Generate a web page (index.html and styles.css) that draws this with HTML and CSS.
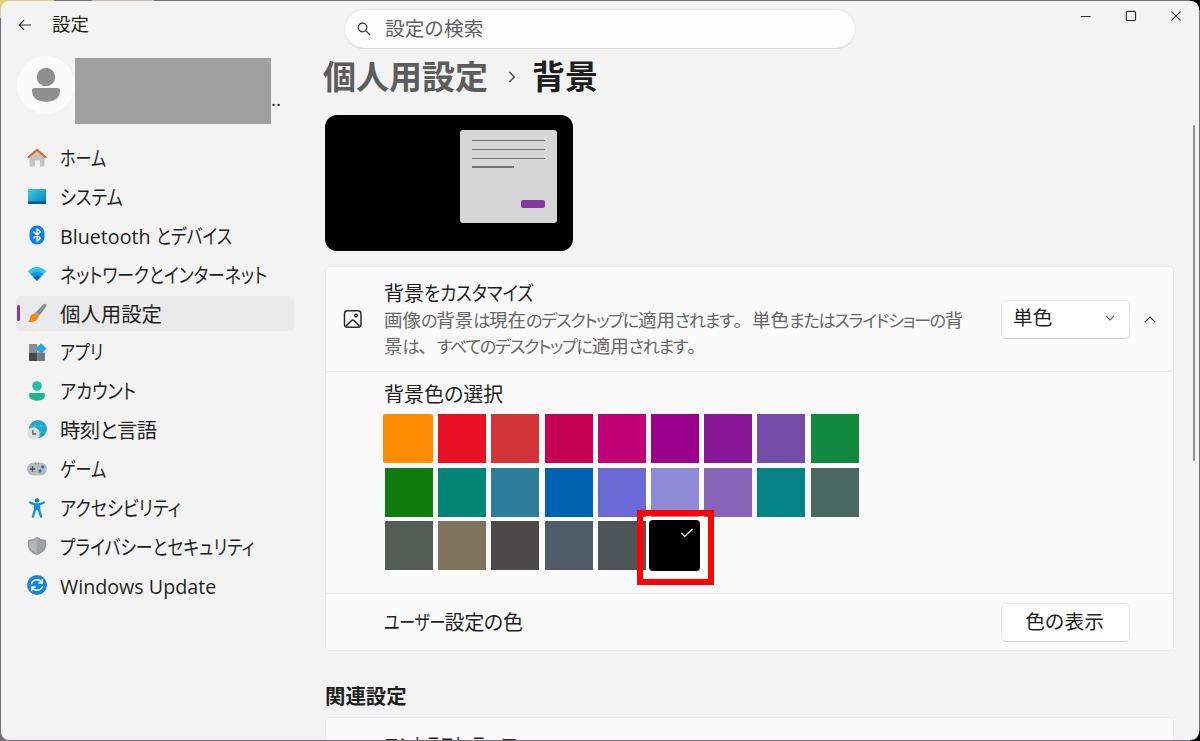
FILE: index.html
```html
<!DOCTYPE html>
<html lang="ja">
  <head>
    <meta charset="utf-8">
    <title>設定</title>
    <link rel="stylesheet" href="styles.css">
  </head>
  <body>
    <div class="window">
      <header class="titlebar">
        <svg class="back" width="14" height="12" viewBox="0 0 14 12"><path d="M13 6H1.5M6 1.2L1.2 6L6 10.8" /></svg>
        <span class="app-title">設定</span>
        <div class="search">
          <svg width="14" height="14" viewBox="0 0 14 14"><circle cx="5.5" cy="5.5" r="4.3" /><path d="M8.7 8.7L13 13" /></svg>
          <span>設定の検索</span>
        </div>
        <div class="controls">
          <svg width="12" height="12" viewBox="0 0 12 12"><path d="M1 6.5H10.6" /></svg>
          <svg width="12" height="12" viewBox="0 0 12 12"><rect x="1.3" y="1.3" width="9.2" height="9.2" rx="1" /></svg>
          <svg width="12" height="12" viewBox="0 0 12 12"><path d="M1.3 1.3L10.7 10.7M10.7 1.3L1.3 10.7" /></svg>
        </div>
      </header>

      <div class="content">
        <aside class="sidebar">
          <div class="account">
            <div class="avatar">
              <svg width="30" height="36" viewBox="0 0 30 36"><circle cx="15" cy="10" r="9.2" fill="#8f8f8f" /><path fill="#8f8f8f" d="M3.5 21h23q2.5 0 2.5 2.500c0 7-5 11.300-14 11.300s-14-4.300-14-11.300q0-2.500 2.500-2.500z" /></svg>
            </div>
            <div class="account-name"></div>
            <span class="account-dots">..</span>
          </div>

          <nav class="menu">
            <a class="item">
              <svg width="20" height="20" viewBox="0 0 20 20"><path fill="#c3c3c5" d="M10 3L17.500 9v8.500q0 1-1 1h-3.500v-6H8v6H3.500q-1 0-1-1V9z" /><path fill="none" stroke="#d9692c" stroke-width="2.200" stroke-linecap="round" stroke-linejoin="round" d="M1.500 9.300L10 1.800l8.500 7.500" /></svg>
              <span class="label"><span class="kana tight">ホーム</span></span>
            </a>
            <a class="item">
              <svg width="20" height="20" viewBox="0 0 20 20">
                <linearGradient id="screen" x2="1" y2="1"><stop stop-color="#35d3e4" /><stop offset="1" stop-color="#0b78c4" /></linearGradient>
                <rect x="1" y="3" width="18" height="15" rx="1.200" fill="url(#screen)" /><path fill="#08558c" d="M1 15.500h18v1.300q0 1.200-1.200 1.200H2.200Q1 18 1 16.800z" />
              </svg>
              <span class="label"><span class="kana wide">システム</span></span>
            </a>
            <a class="item">
              <svg width="20" height="20" viewBox="0 0 20 20"><rect x="2.500" y=".5" width="15" height="19" rx="7.500" fill="#0a80f5" /><path fill="none" stroke="#fff" stroke-width="1.300" stroke-linejoin="round" d="M6.300 6.500l7.200 6.700-3.500 3V3.800l3.500 3-7.200 6.700" /></svg>
              <span class="label"><span class="latin">Bluetooth </span><span class="kana">とデバイス</span></span>
            </a>
            <a class="item">
              <svg width="20" height="20" viewBox="0 0 20 20"><path fill="#31c6e8" d="M.7 7.300Q10-1.500 19.300 7.300L10 16.800z" /><path fill="#1697dc" d="M3.600 10.300Q10 4.500 16.400 10.300L10 16.800z" /><path fill="#105fb0" d="M6.300 13Q10 9.800 13.700 13L10 16.800z" /></svg>
              <span class="label"><span class="kana">ネットワークとインターネット</span></span>
            </a>
            <a class="item active">
              <svg width="20" height="20" viewBox="0 0 20 20"><path fill="#888e94" d="M19.200 1.100q.8.900-.3 2.700L12.500 12.500 8.500 9.500 16.300 1.500q1.900-1.300 2.900-.4z" /><path fill="#c4a182" d="M8.500 9.300l4 3.200-1.200 1.700-4.200-3.200z" /><path fill="#f58518" d="M7 10.800q3.400.2 4.300 3.300c-.5 4-5.300 5.400-10.700 4.900 2.600-1 2-3 2.700-5.400q1-2.600 3.700-2.800z" /></svg>
              <span class="label">個人用設定</span>
            </a>
            <a class="item">
              <svg width="20" height="20" viewBox="0 0 20 20"><path fill="#898e92" d="M2 2h8v8.500H2z" /><path fill="#45484c" d="M2 10.500h8.500V19H3q-1 0-1-1z" /><path fill="#74797f" d="M10.500 10.500H18V18q0 1-1 1h-6.500z" /><path fill="#28a5e4" d="M14 1.300L19.500 6.600 14 12 8.700 6.600z" /></svg>
              <span class="label"><span class="kana tight">アプリ</span></span>
            </a>
            <a class="item">
              <svg width="20" height="20" viewBox="0 0 20 20"><circle cx="10" cy="5" r="4.800" fill="#25bfa4" /><path fill="#1eb592" d="M4 12h12q2 0 2 2c0 3.600-3.300 5.700-8 5.700S2 17.600 2 14q0-2 2-2z" /></svg>
              <span class="label"><span class="kana wide">アカウント</span></span>
            </a>
            <a class="item">
              <svg width="20" height="20" viewBox="0 0 20 20"><circle cx="11" cy="9" r="9" fill="#1da4cd" /><path fill="none" stroke="#6cd4e8" stroke-width=".4" d="M3 6h16M3 12h16M11 0q-7 9 0 18M11 0q7 9 0 18" /><circle cx="6.500" cy="13.500" r="6.200" fill="#dedfe1" /><path fill="none" stroke="#5d6268" stroke-width="1.300" d="M5.800 10v4h3.400" /></svg>
              <span class="label time">時刻と言語</span>
            </a>
            <a class="item">
              <svg width="20" height="20" viewBox="0 0 20 20"><rect y="3.500" width="20" height="13" rx="6.500" fill="#b7babf" /><path fill="none" stroke="#53585f" stroke-width="1.500" d="M2.800 10h5.400M5.500 7.300v5.400" /><circle cx="15.700" cy="7.800" r="1.600" fill="#1977cf" /><circle cx="13" cy="11.900" r="1.600" fill="#1977cf" /><path stroke="#70757b" stroke-width="1" d="M8 4.800h1M11 4.800h1" /></svg>
              <span class="label"><span class="kana tight">ゲーム</span></span>
            </a>
            <a class="item">
              <svg width="20" height="20" viewBox="0 0 20 20"><circle cx="10" cy="2.500" r="2.300" fill="#1779cf" /><path fill="none" stroke="#188ce0" stroke-width="2.400" stroke-linecap="round" stroke-linejoin="round" d="M3.200 4.500L8 6.500h4l4.800-2M8 6.500v5L6 18.500M12 6.500v5l2 7" /><path fill="#188ce0" d="M7.500 6h5v7L10 11.800 7.500 13z" /></svg>
              <span class="label"><span class="kana wide">アクセシビリティ</span></span>
            </a>
            <a class="item">
              <svg width="20" height="20" viewBox="0 0 20 20"><path fill="#9299a1" d="M10 1q4 3 9 3v5.500c0 4.500-3.500 7.500-9 9.500-5.500-2-9-5-9-9.500V4q5 0 9-3z" /><path fill="#b2b7bd" d="M10 2.500V17.500C5.500 15.700 2.400 13 2.400 9.500V5.200Q6.500 5 10 2.500z" /><path fill="#9da3aa" d="M10 2.500V17.500c4.500-1.800 7.600-4.500 7.600-8V5.200Q13.500 5 10 2.500z" /></svg>
              <span class="label"><span class="kana">プライバシーとセキュリティ</span></span>
            </a>
            <a class="item">
              <svg width="20" height="20" viewBox="0 0 20 20"><circle cx="10" cy="10" r="10" fill="#1487dc" /><path fill="none" stroke="#fff" stroke-width="1.500" stroke-linecap="round" stroke-linejoin="round" d="M4.500 8.500Q6 4.700 10 4.700q3.200 0 5 3M15.300 4.500v3.400h-3.400M15.500 11.500Q14 15.300 10 15.300q-3.200 0-5-3M4.700 15.500v-3.400h3.400" /></svg>
              <span class="label"><span class="latin">Windows Update</span></span>
            </a>
          </nav>
        </aside>

        <main class="page">
          <h1 class="breadcrumb">
            <span class="parent">個人用設定</span>
            <svg width="8" height="12" viewBox="0 0 8 12"><path d="M1.300 1l5 5-5 5" /></svg>
            <span>背景</span>
          </h1>

          <div class="preview">
            <div class="preview-window">
              <i></i>
              <i></i>
              <i></i>
              <i class="short"></i>
              <b></b>
            </div>
          </div>

          <section class="card">
            <div class="row row-custom">
              <svg class="picture" width="20" height="20" viewBox="0 0 20 20"><rect x="1.500" y="1.700" width="16.500" height="16.500" rx="3" /><path d="M3 17l5.500-5.400q1.300-1.100 2.600 0L16.500 17" /><circle cx="13" cy="6.500" r="1.300" /></svg>
              <div class="texts">
                <div class="row-title">背景<span class="kana custom">をカスタマイズ</span></div>
                <div class="row-desc">画像<em>の</em>背景<em>は</em>現在<em>のデスクトップに</em>適用<em>されます</em>。単色<em>またはスライドショーの</em>背<br>景<em>は</em>、<em>すべてのデスクトップに</em>適用<em>されます</em>。</div>
              </div>
              <div class="button select">
                <span>単色</span>
                <svg width="10" height="6" viewBox="0 0 10 6"><path d="M1 .8l4 4 4-4" /></svg>
              </div>
              <svg class="collapse" width="12" height="7" viewBox="0 0 12 7"><path d="M.8 6.200L6 1l5.200 5.200" /></svg>
            </div>

            <div class="row-colors">
              <div class="row-title">背景色の選択</div>
              <div class="swatches">
                <div class="swatch orange"></div>
                <div class="swatch red"></div>
                <div class="swatch brick"></div>
                <div class="swatch rose"></div>
                <div class="swatch magenta"></div>
                <div class="swatch plum"></div>
                <div class="swatch violet"></div>
                <div class="swatch iris"></div>
                <div class="swatch green"></div>
                <div class="swatch forest"></div>
                <div class="swatch seafoam"></div>
                <div class="swatch steel"></div>
                <div class="swatch blue"></div>
                <div class="swatch indigo"></div>
                <div class="swatch lavender"></div>
                <div class="swatch orchid"></div>
                <div class="swatch teal"></div>
                <div class="swatch moss"></div>
                <div class="swatch sage"></div>
                <div class="swatch sand"></div>
                <div class="swatch charcoal"></div>
                <div class="swatch slate"></div>
                <div class="swatch storm"></div>
                <div class="swatch black">
                  <svg width="14" height="10" viewBox="0 0 14 10"><path d="M1.300 5l3.500 3.500L12.500 1" /></svg>
                  <div class="highlight"></div>
                </div>
              </div>
            </div>

            <div class="row row-user">
              <div class="row-title user-color"><span class="kana">ユーザー</span>設定の色</div>
              <div class="button show-color">色の表示</div>
            </div>
          </section>

          <h2 class="related">関連設定</h2>
          <section class="card related-card">
            <div class="row-title"><span class="kana">コントラスト テーマ</span></div>
          </section>
        </main>
      </div>
      <div class="scrollbar"></div>
    </div>
  </body>
</html>
```
FILE: styles.css
```css
* {
  box-sizing: border-box;
}

body {
  margin: 0;
  padding: 1px 1px 1px;
  width: 1200px;
  height: 741px;
  overflow: hidden;
  background:
    linear-gradient(#e4cf80, #e4cf80) 0 0 / 54px 18px no-repeat,
    linear-gradient(#c9bda8, #c9bda8) 92px 0 / 62px 2px no-repeat,
    linear-gradient(#000, #000) 1190px 0 / 10px 10px no-repeat,
    linear-gradient(#000, #000) 1190px 731px / 10px 10px no-repeat,
    #727074;
  font-family: "Open Sans", "Noto Sans CJK JP", sans-serif;
  font-size: 20px;
  color: #1f1f1f;
}

svg {
  display: block;
  flex: none;
}

.window {
  position: relative;
  height: 739px;
  padding-top: 1px;
  overflow: hidden;
  border-radius: 8px;
  background: #f3f3f3;
}

/* title bar */
.titlebar {
  display: flex;
  align-items: flex-start;
  height: 54px;
  padding-left: 17px;
}

.titlebar svg {
  fill: none;
  stroke: #333;
  stroke-width: 1.2;
}

.back {
  margin-top: 17px;
}

.app-title {
  width: 290px;
  margin: 8px 0 0 20px;
  font-size: 18.5px;
  line-height: 28px;
}

.search {
  display: flex;
  align-items: center;
  gap: 14px;
  width: 512px;
  height: 40px;
  margin: 7px 0 0 2px;
  padding-left: 12px;
  border: 1px solid #e7e7e7;
  border-bottom-color: #d9d9d9;
  border-radius: 20px;
  background: #fdfdfd;
  color: #606060;
  font-size: 19.7px;
  line-height: 30px;
}

.controls {
  display: flex;
  gap: 33px;
  margin: 8px 0 0 224px;
}

.content {
  display: flex;
}

/* left column */
.sidebar {
  width: 293px;
  padding-left: 15px;
}

.account {
  display: flex;
  height: 84px;
}

.avatar {
  display: flex;
  justify-content: center;
  width: 58px;
  height: 58px;
  margin-left: 1px;
  padding-top: 11px;
  border-radius: 50%;
  background: #fbfbfb;
}

.account-name {
  width: 196px;
  height: 66px;
  margin-top: 2px;
  background: #a0a0a0;
}

.account-dots {
  margin-top: 29px;
  font-size: 19px;
  line-height: 28px;
}

.menu {
  display: flex;
  flex-direction: column;
  gap: 3.9px;
}

.item {
  display: flex;
  align-items: center;
  height: 35px;
  padding-left: 11px;
  border-radius: 4px;
}

.item .label {
  margin: 2px 0 0 13px;
  font-size: 20.4px;
  line-height: 35px;
  white-space: pre;
  font-feature-settings: "palt";
}

.label.time {
  letter-spacing: -0.6px;
}

.latin {
  font-size: 19.7px;
}

/* narrow kana */
.kana {
  display: inline-block;
  transform: scaleX(0.825);
  transform-origin: left;
}

.kana.tight {
  transform: scaleX(0.79);
}

.kana.wide {
  transform: scaleX(0.845);
}

.kana.custom {
  transform: scaleX(0.87);
}

.item.active {
  position: relative;
  background: #eaeaea;
}

.item.active::before {
  content: "";
  position: absolute;
  left: 1px;
  top: 9px;
  width: 3px;
  height: 16px;
  border-radius: 2px;
  background: #8a35a4;
}

/* right column */
.page {
  width: 849px;
  margin-left: 31px;
}

.breadcrumb {
  display: flex;
  align-items: center;
  height: 42px;
  margin: 0 0 17px -2px;
  font-size: 33px;
  font-weight: 600;
  line-height: 42px;
}

.breadcrumb .parent {
  color: #5c5c5c;
}

.breadcrumb svg {
  margin: 0 16px 0 20px;
  fill: none;
  stroke: #555;
  stroke-width: 1.6;
}

.preview {
  display: flex;
  justify-content: flex-end;
  width: 248px;
  height: 136px;
  padding: 15px 16px 0 0;
  border-radius: 12px;
  background: #000;
}

.preview-window {
  display: flex;
  flex-direction: column;
  gap: 7.4px;
  width: 97px;
  height: 93px;
  padding: 10px 12px;
  border-radius: 3px;
  background: #d6d6d6;
}

.preview-window i {
  height: 1.4px;
  background: #777;
}

.preview-window .short {
  width: 42px;
}

.preview-window b {
  align-self: flex-end;
  width: 24px;
  height: 8px;
  margin-top: 25px;
  border-radius: 2px;
  background: #8a35a4;
}

.card {
  margin-top: 15px;
  border: 1px solid #e9e9e9;
  border-radius: 5px;
  background: #fbfbfb;
}

.row {
  display: flex;
  align-items: center;
}

.row-title {
  font-size: 20px;
  line-height: 26px;
  white-space: nowrap;
  font-feature-settings: "palt";
}

.row-desc {
  color: #666;
  font-size: 18.5px;
  line-height: 25px;
  white-space: nowrap;
}

.row-desc em {
  font-size: 17.2px;
  font-style: normal;
  letter-spacing: -1.35px;
  font-feature-settings: "palt";
}

.row-custom {
  height: 104px;
  padding-left: 17px;
}

.picture {
  fill: none;
  stroke: #2c2c2c;
  stroke-width: 1.5;
}

.texts {
  width: 617px;
  margin-left: 21px;
  padding-top: 2px;
}

.button {
  display: flex;
  align-items: center;
  justify-content: center;
  width: 129px;
  height: 39px;
  padding-bottom: 2px;
  border: 1px solid #e8e8e8;
  border-bottom-color: #d3d3d3;
  border-radius: 5px;
  background: #fefefe;
  font-size: 19.7px;
  line-height: 30px;
}

.select {
  justify-content: space-between;
  padding: 0 14px 2px 11px;
}

.show-color {
  padding: 0 2px 0 0;
}

.select svg,
.collapse {
  fill: none;
  stroke: #555;
  stroke-width: 1.2;
}

.collapse {
  margin-left: 14px;
  stroke: #222;
}

.row-colors {
  height: 222px;
  padding: 10px 0 0 59px;
  border-top: 1px solid #e9e9e9;
}

.row-colors .row-title {
  margin-left: -1px;
}

.swatches {
  display: grid;
  grid-template-columns: repeat(9, 48px);
  grid-auto-rows: 49px;
  gap: 4.7px 5.2px;
  margin-top: 6px;
}

.orange {
  margin-left: -2px;
  border-radius: 2px;
  background: #ff8c00;
}

.red {
  background: #e81123;
}

.brick {
  background: #d13438;
}

.rose {
  background: #c30052;
}

.magenta {
  background: #bf0077;
}

.plum {
  background: #9a0089;
}

.violet {
  background: #881798;
}

.iris {
  background: #744da9;
}

.green {
  background: #10893e;
}

.forest {
  background: #107c10;
}

.seafoam {
  background: #018574;
}

.steel {
  background: #2d7d9a;
}

.blue {
  background: #0063b1;
}

.indigo {
  background: #6b69d6;
}

.lavender {
  background: #8e8cd8;
}

.orchid {
  background: #8764b8;
}

.teal {
  background: #038387;
}

.moss {
  background: #486860;
}

.sage {
  background: #525e54;
}

.sand {
  background: #7e735f;
}

.charcoal {
  background: #4c4a48;
}

.slate {
  background: #515c6b;
}

.storm {
  background: #4a5459;
}

.black {
  position: relative;
  margin: -1px -1px -1px -2px;
  padding: 8px 0 0 31px;
  border-radius: 4px;
  background: #000;
}

.black svg {
  fill: none;
  stroke: #fff;
  stroke-width: 1.2;
}

/* red marker around the chosen colour */
.highlight {
  position: absolute;
  top: -10px;
  left: -12px;
  width: 77px;
  height: 75px;
  border: 6px solid #fe0000;
}

.row-user {
  height: 57px;
  padding-left: 58px;
  border-top: 1px solid #e9e9e9;
}

.user-color {
  width: 617px;
  padding-top: 1px;
  letter-spacing: -0.3px;
}

.user-color .kana {
  margin-right: -16px;
  transform: scaleX(0.8);
}

.related {
  margin: 30px 0 0;
  font-size: 20.4px;
  font-weight: 600;
  line-height: 30px;
}

.related-card {
  height: 60px;
  margin-top: 6px;
  padding: 15px 0 0 58px;
}

.related-card .kana {
  transform: scaleX(0.81);
}

.scrollbar {
  position: absolute;
  top: 124px;
  right: 4px;
  width: 2px;
  height: 336px;
  border-radius: 1px;
  background: #8c8c8c;
}
```
